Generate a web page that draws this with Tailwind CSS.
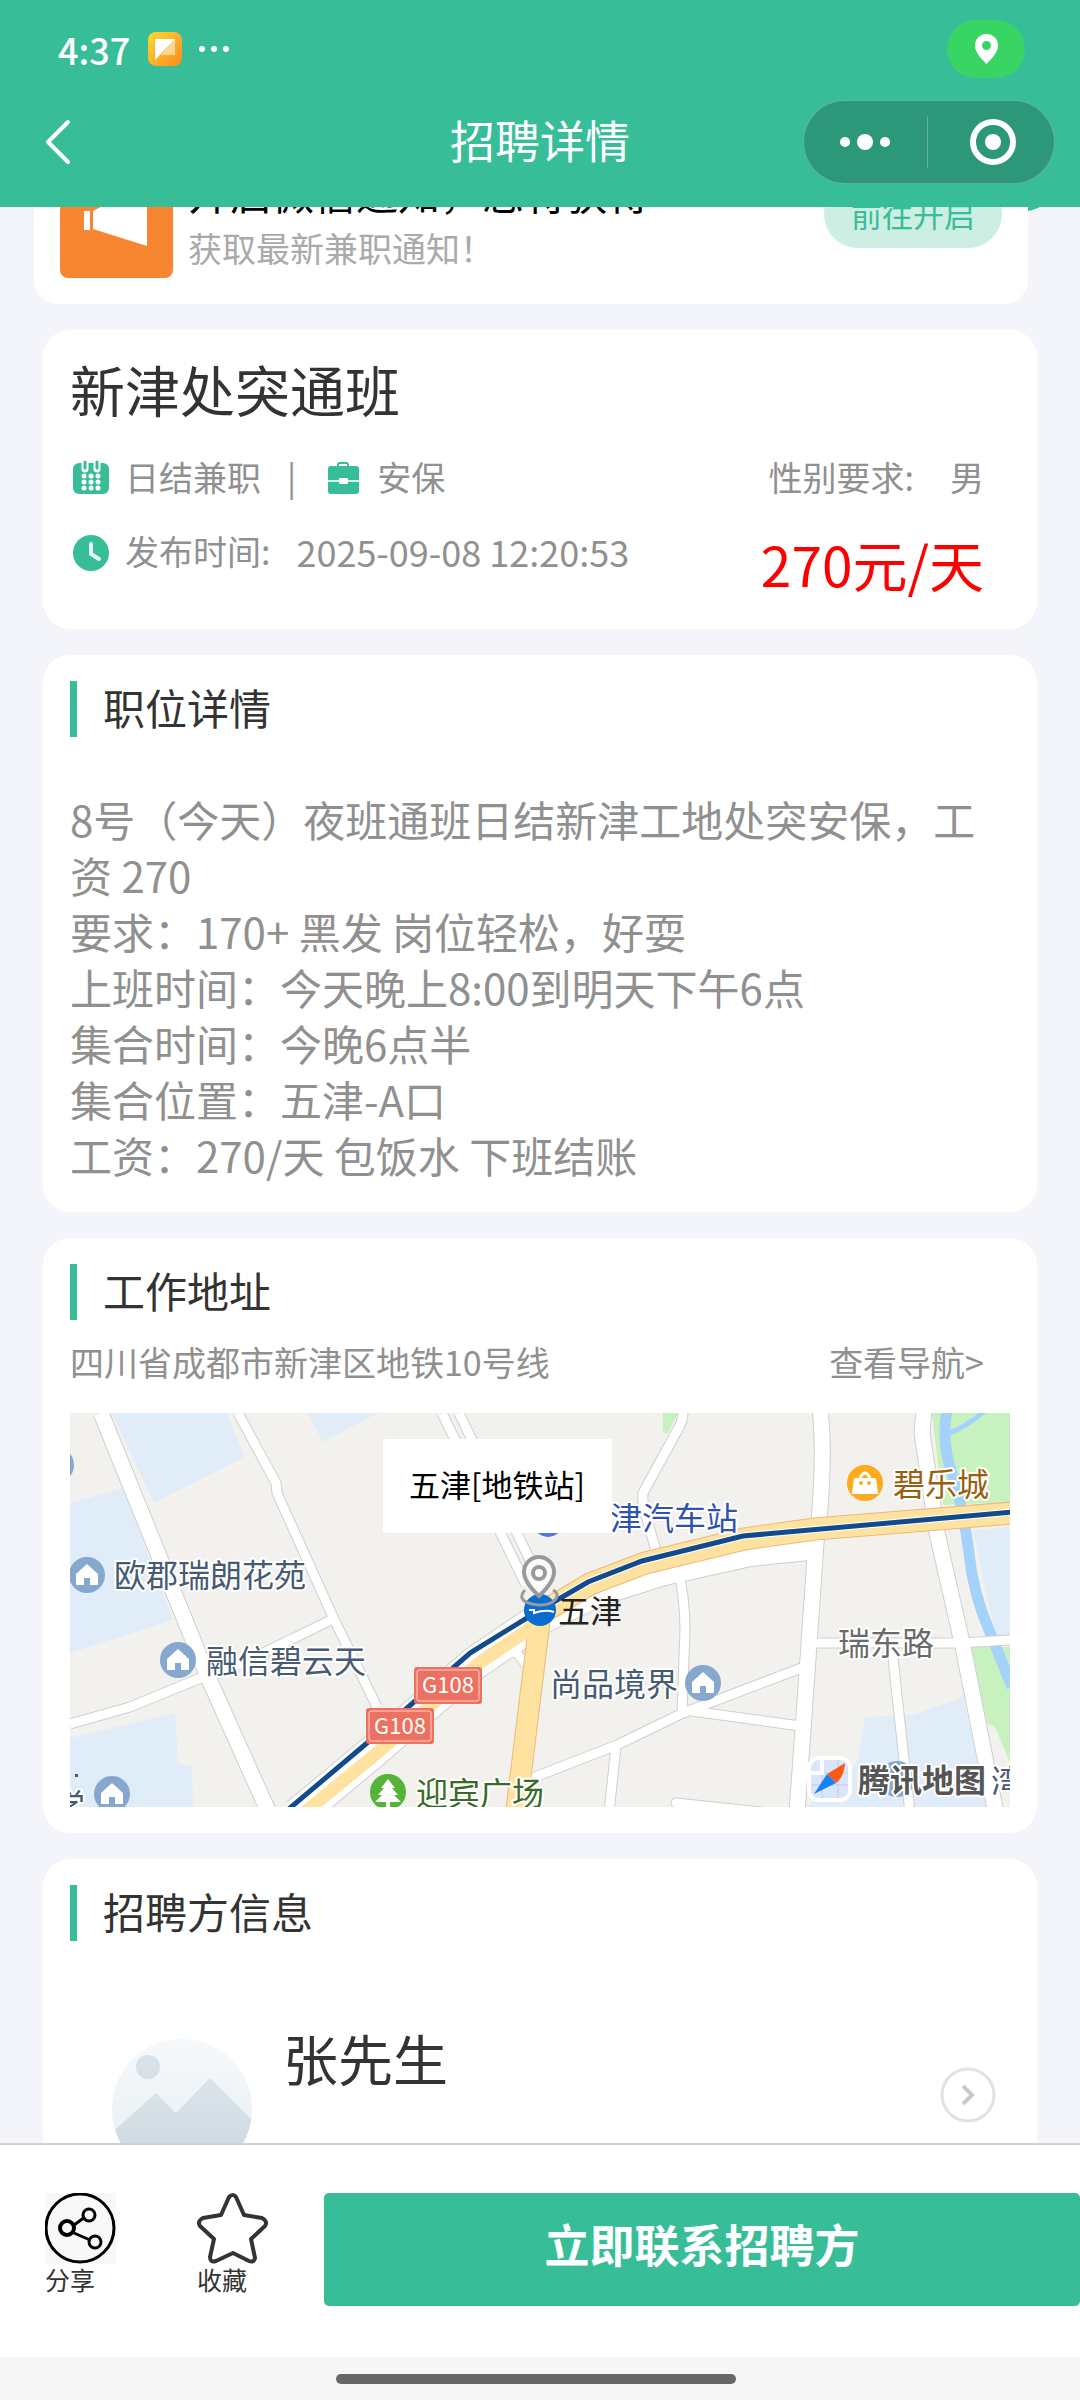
<!DOCTYPE html>
<html lang="zh-CN">
  <head>
    <meta charset="UTF-8" />
    <meta name="viewport" content="width=device-width, initial-scale=1.0" />
    <title>招聘详情</title>
    <script src="https://cdn.jsdelivr.net/npm/@tailwindcss/browser@4"></script>
  </head>
  <body class="flex h-screen flex-col bg-[#f4f5fa] font-['Noto_Sans_CJK_SC',sans-serif] text-[#333333]">
    <!-- Status bar + title bar -->
    <header class="relative shrink-0 bg-[#38bd99] text-white">
      <div class="flex h-[98px] items-center justify-between pr-[55px] pl-[58px]">
        <div class="flex items-center">
          <span class="text-[36px] leading-[48px] font-medium">4:37</span>
          <svg class="ml-[18px] h-[34px] w-[34px]" viewBox="0 0 34 34">
            <defs>
              <linearGradient id="note" x1="0" y1="0" x2="1" y2="1">
                <stop offset="0" stop-color="#fdd835" />
                <stop offset="1" stop-color="#fb8c1e" />
              </linearGradient>
            </defs>
            <rect width="34" height="34" rx="8" fill="url(#note)" />
            <path d="M27 7v16H13z" fill="#ffd591" />
            <path d="M7 7h20L7 28z" fill="#fff" />
          </svg>
          <svg class="ml-4 h-2 w-8" viewBox="0 0 32 8" fill="#fff">
            <circle cx="4" cy="4" r="3" />
            <circle cx="16" cy="4" r="3" />
            <circle cx="28" cy="4" r="3" />
          </svg>
        </div>
        <div class="flex h-[58px] w-[78px] items-center justify-center rounded-full bg-[#38d464]">
          <svg class="h-[30px] w-[23px]" viewBox="0 0 23 30">
            <path
              fill="#fff"
              fill-rule="evenodd"
              d="M11.500 0A11.500 11.500 0 0 0 0 11.500C0 19 7 25 11.500 30C16 25 23 19 23 11.500A11.500 11.500 0 0 0 11.500 0ZM11.500 7a4.500 4.500 0 1 1 0 9a4.500 4.500 0 0 1 0-9Z"
            />
          </svg>
        </div>
      </div>

      <div class="grid h-[109px] grid-cols-3 items-start px-[25px]">
        <button type="button" aria-label="返回" class="mt-[19px] ml-4 w-8">
          <svg class="h-[50px] w-8" viewBox="0 0 32 50" fill="none" stroke="#fff" stroke-width="4">
            <path d="M27 5L7 25L27 45" stroke-linecap="round" stroke-linejoin="round" />
          </svg>
        </button>
        <h1 class="mt-2 text-center text-[45px] leading-[68px]">招聘详情</h1>
        <div
          class="mt-[2px] flex h-[84px] w-[252px] items-center justify-self-end rounded-full border border-white/25 bg-[#2c9779]"
        >
          <button type="button" aria-label="更多" class="flex flex-1 justify-center">
            <svg class="h-4 w-[50px]" viewBox="0 0 50 16" fill="#fff">
              <circle cx="5" cy="8" r="5" />
              <circle cx="25" cy="8" r="8" />
              <circle cx="45" cy="8" r="5" />
            </svg>
          </button>
          <span class="h-[52px] w-px bg-white/25"></span>
          <button type="button" aria-label="关闭" class="flex flex-1 justify-center pl-1">
            <svg class="h-12 w-12" viewBox="0 0 48 48">
              <circle cx="24" cy="24" r="20" fill="none" stroke="#fff" stroke-width="6" />
              <circle cx="24" cy="24" r="8" fill="#fff" />
            </svg>
          </button>
        </div>
      </div>
      <svg class="absolute top-full right-[34px] h-[6px] w-[24px]" viewBox="0 0 24 6">
        <path d="M0 0H18Q10 4 0 5Z" fill="#38bd99" />
      </svg>
    </header>

    <main class="relative min-h-0 flex-1 overflow-y-auto [scrollbar-width:none]">
      <div class="-mt-[68px] flex flex-col gap-[26px] pb-10">
        <!-- Notice -->
        <section class="mr-[52px] ml-[34px] flex items-center rounded-3xl bg-white p-[26px]">
          <svg class="h-[113px] w-[113px]" viewBox="0 0 113 113">
            <rect width="113" height="113" rx="8" fill="#f68632" />
            <path d="M24 46H30V65H24ZM33 46L52 36L87 20V81L33 64Z" fill="#fff" />
          </svg>
          <div class="ml-[15px] flex-1">
            <p class="text-[42px] leading-[52px] text-black">开启微信通知，您将获得</p>
            <p class="text-[34px] leading-[60px] text-[#aaaaaa]">获取最新兼职通知！</p>
          </div>
          <button
            type="button"
            class="-mt-4 h-[68px] w-[178px] rounded-full bg-[#cceee3] text-[31px] leading-[62px] text-[#38bd99]"
          >
            前往开启
          </button>
        </section>

        <!-- Job summary -->
        <section class="mx-[43px] rounded-[27px] bg-white px-[27px] py-[26px]">
          <h2 class="text-[55px] leading-[64px]">新津处突通班</h2>
          <div class="mt-[29px] flex justify-between pr-[26px] text-[34px] leading-[56px] text-[#909090]">
            <div class="flex items-center">
              <svg class="mr-[13px] h-[42px] w-[42px]" viewBox="0 0 42 42">
                <rect x="3" y="7" width="36" height="31" rx="6" fill="#38bd99" />
                <path d="M15 5v8M27 5v8" stroke="#fff" stroke-width="7" stroke-linecap="round" />
                <path d="M15 6v6M27 6v6" stroke="#38bd99" stroke-width="3" stroke-linecap="round" />
                <g fill="#fff">
                  <circle cx="14" cy="20" r="2.500" /><circle cx="21" cy="20" r="2.500" /><circle cx="28" cy="20" r="2.500" />
                  <circle cx="14" cy="26" r="2.500" /><circle cx="21" cy="26" r="2.500" /><circle cx="28" cy="26" r="2.500" />
                  <circle cx="14" cy="32" r="2.500" /><circle cx="21" cy="32" r="2.500" /><circle cx="28" cy="32" r="2.500" />
                </g>
              </svg>
              <span>日结兼职</span>
              <span class="px-[26px]">|</span>
              <svg class="mr-[13px] h-[42px] w-[42px]" viewBox="0 0 42 42">
                <path d="M16 11V9q0-2 2-2h6q2 0 2 2v2" fill="none" stroke="#38bd99" stroke-width="2" />
                <rect x="6" y="10" width="31" height="28" rx="3" fill="#38bd99" />
                <path d="M6 25H37" stroke="#d5f2ea" stroke-width="2" />
                <rect x="17" y="22" width="9" height="6" rx="1" fill="#fff" />
              </svg>
              <span>安保</span>
            </div>
            <div class="flex gap-9"><span>性别要求:</span><span>男</span></div>
          </div>
          <div class="mt-[18px] flex items-start justify-between pr-[26px]">
            <div class="flex items-center text-[34px] leading-[56px] text-[#909090]">
              <svg class="mr-[13px] h-[42px] w-[42px]" viewBox="0 0 42 42">
                <circle cx="21" cy="23" r="18" fill="#38bd99" />
                <path d="M21 14V24L29 29" fill="none" stroke="#e4f7f1" stroke-width="4" stroke-linecap="round" />
              </svg>
              <span>发布时间:</span>
              <time class="ml-[26px] text-[36px]">2025-09-08 12:20:53</time>
            </div>
            <p class="text-[55px] leading-[80px] text-[#ff0000]">270元/天</p>
          </div>
        </section>

        <!-- Description -->
        <section class="mx-[43px] rounded-[27px] bg-white px-[27px] pt-[26px] pb-[29px]">
          <div class="flex">
            <span class="h-14 w-[7px] bg-[#38bd99]"></span>
            <h3 class="ml-[26px] text-[42px] leading-[52px]">职位详情</h3>
          </div>
          <p class="mt-[54px] text-[42px] leading-[56px] text-[#909090]">
            8号（今天）夜班通班日结新津工地处突安保，工资 270<br />
            要求：170+ 黑发 岗位轻松，好耍<br />
            上班时间：今天晚上8:00到明天下午6点<br />
            集合时间：今晚6点半<br />
            集合位置：五津-A口<br />
            工资：270/天 包饭水 下班结账
          </p>
        </section>

        <!-- Address -->
        <section class="mx-[43px] rounded-[27px] bg-white px-[27px] py-[26px]">
          <div class="flex">
            <span class="h-14 w-[7px] bg-[#38bd99]"></span>
            <h3 class="ml-[26px] text-[42px] leading-[52px]">工作地址</h3>
          </div>
          <div class="mt-[14px] flex justify-between pr-[26px] text-[34px] leading-[56px] text-[#909090]">
            <p>四川省成都市新津区地铁10号线</p>
            <a href="#map">查看导航&gt;</a>
          </div>
          <svg
            id="map"
            class="mt-[23px] h-[394px] w-full bg-[#f2f1ee]"
            viewBox="0 0 940 394"
            preserveAspectRatio="xMidYMid slice"
          >
            <defs>
              <g id="home">
                <circle r="18" fill="#86a8cf" />
                <path d="M0 -11L11 -1V9Q11 10 10 10H3V3H-3V10H-10Q-11 10 -11 9V-1Z" fill="#fff" />
              </g>
              <!-- white streets -->
              <g id="streets" fill="none" stroke-linejoin="round">
                <path d="M168 0L206 70L207 80L263 204L307 294M137 265L175 249L263 206M133 264L60 294L0 311" />
                <path d="M372 0L456 172M389 0L472 172M436 234Q448 238 456 252" />
                <path d="M613 0Q613 8 608 16L573 80Q572 92 577 106L586 138M607 150Q615 184 615 217L612 300" />
                <path d="M440 374L470 362L547 332L613 300L734 254M622 298L730 313M546 333L539 400" />
                <path d="M747 230H890L940 227M822 236L830 310L840 400M606 390L720 402" stroke-linecap="round" />
              </g>
              <g id="avenues" fill="none" stroke-linejoin="round">
                <path d="M31 0L138 264L199 400M750 -4Q755 40 749 107L746 130L737 260L727 400" />
                <path d="M854 -4L852 20L858 60L867 120L893 234L926 400" />
              </g>
            </defs>

            <!-- land, parks and water -->
            <g fill="#e0edf8">
              <path d="M42 0H157L175 44L84 90ZM0 90L53 75L103 207L0 240ZM238 0H308L253 29Z" />
              <path d="M0 325L105 300L108 350L122 354L123 394H0ZM903 117L940 114V224H926Z" />
              <path d="M795 304L843 302L893 284L917 394H737L787 350Z" />
            </g>
            <path d="M862 0H940V89L873 92ZM593 0H608L598 20H593ZM898 234H940V350L925 314L917 310Z" fill="#c8f1c0" />
            <path d="M877 -4Q871 30 882 60Q892 88 899 140Q903 180 919 217L942 274" fill="none" stroke="#a5d2fa" stroke-width="11" />
            <path d="M880 20Q895 14 915 -2" fill="none" stroke="#a5d2fa" stroke-width="5" />

            <use href="#streets" stroke="#cfcfcf" stroke-width="11" />
            <use href="#avenues" stroke="#cfcfcf" stroke-width="17" />
            <path d="M227 402L305 337L405 250L474 203L530 176L590 157L680 137L748 130" fill="none" stroke="#cfcfcf" stroke-width="34" />
            <use href="#streets" stroke="#fff" stroke-width="9" />
            <use href="#avenues" stroke="#fff" stroke-width="15" />
            <path d="M227 402L305 337L405 250L474 203L530 176L590 157L680 137L748 130" fill="none" stroke="#fff" stroke-width="32" />

            <!-- highway and metro line -->
            <path d="M470 205L446 400" stroke="#efb878" stroke-width="22" />
            <path d="M470 205L446 400" stroke="#fee3a0" stroke-width="20" />
            <path d="M228 405L307 340L409 250L479 203" fill="none" stroke="#fee3a0" stroke-width="13" />
            <path d="M473 199L520 171L575 150L674 126L745 116L942 100" fill="none" stroke="#efb878" stroke-width="23" />
            <path d="M473 199L520 171L575 150L674 126L745 116L942 100" fill="none" stroke="#fee3a0" stroke-width="21" />
            <path d="M214 400L297 330L400 240L470 197L518 169L572 148L673 123L942 99" fill="none" stroke="#fff" stroke-width="7" />
            <path d="M214 400L297 330L400 240L470 197L518 169L572 148L673 123L942 99" fill="none" stroke="#114b8c" stroke-width="5" />

            <!-- road signs -->
            <g fill="#ec7160">
              <rect x="344" y="254" width="68" height="37" rx="3" />
              <rect x="296" y="295" width="68" height="36" rx="3" />
            </g>
            <g fill="none" stroke="#fbd3cc">
              <rect x="347" y="257" width="62" height="31" rx="2" />
              <rect x="299" y="298" width="62" height="30" rx="2" />
            </g>
            <g fill="#fff" font-size="22" text-anchor="middle">
              <text x="378" y="280">G108</text>
              <text x="330" y="321">G108</text>
            </g>

            <!-- places -->
            <circle cx="-14" cy="52" r="18" fill="#86a8cf" />
            <use href="#home" x="17" y="162" />
            <use href="#home" x="108" y="247" />
            <use href="#home" x="42" y="381" />
            <use href="#home" x="633" y="270" />
            <circle cx="827" cy="366" r="18" fill="#86a8cf" />
            <circle cx="795" cy="70" r="18" fill="#fbab1c" />
            <path d="M785 66H805L807 80H783Z" fill="#fff" stroke="#fff" stroke-width="2" stroke-linejoin="round" />
            <path d="M790 65Q795 55 800 65" fill="none" stroke="#fff" stroke-width="3" />
            <circle cx="791" cy="70" r="2" fill="#fbab1c" />
            <circle cx="799" cy="70" r="2" fill="#fbab1c" />
            <circle cx="318" cy="379" r="18" fill="#55b437" />
            <path d="M318 366L325 375H322L328 382H324L331 389H320V394H316V389H305L312 382H308L314 375H311Z" fill="#fff" />
            <circle cx="478" cy="109" r="15" fill="#4f77de" />
            <g font-size="32" stroke="#fff" stroke-width="4" stroke-linejoin="round" paint-order="stroke">
              <g fill="#465a72">
                <text x="44" y="174">欧郡瑞朗花苑</text>
                <text x="136" y="260">融信碧云天</text>
                <text x="480" y="283">尚品境界</text>
                <text x="921" y="380">湾</text>
                <text x="-17" y="404">学</text>
              </g>
              <text x="346" y="392" fill="#396a26">迎宾广场</text>
              <text x="823" y="83" fill="#98600c">碧乐城</text>
              <text x="540" y="117" fill="#2f52ae">津汽车站</text>
              <text x="768" y="242" fill="#6a6a6a">瑞东路</text>
            </g>
            <rect x="5" y="361" width="3" height="3" fill="#465a72" />

            <!-- station marker -->
            <circle cx="470" cy="197" r="16" fill="#0a6bd0" />
            <path d="M459 197h5v3q12 -4 20 -1" fill="none" stroke="#fff" stroke-width="2" />
            <text x="488" y="210" font-size="32" fill="#222">五津</text>
            <path d="M469 183Q454 169 454 159A15 15 0 0 1 484 159Q484 169 469 183Z" fill="#fff" fill-opacity="0.7" stroke="#989b9e" stroke-width="4" />
            <circle cx="469" cy="160" r="6" fill="#fff" stroke="#989b9e" stroke-width="4" />
            <path d="M455 177Q446 187 462 191Q478 194 485 187Q490 181 483 177" fill="none" stroke="#989b9e" stroke-width="3" />
            <rect x="313" y="26" width="229" height="94" fill="#fff" />
            <text x="427" y="84" font-size="31" text-anchor="middle" fill="#000">五津[地铁站]</text>

            <!-- map brand -->
            <rect x="739" y="345" width="41" height="42" rx="10" fill="#d9e6fa" stroke="#fff" stroke-width="4" />
            <path d="M752 347V385M768 347V385M741 360H778M741 372H778" stroke="#c6c8f0" stroke-width="1" />
            <path d="M752 347V360H741" fill="none" stroke="#fff" stroke-width="4" />
            <path d="M775 350L757 361L766 370Q774 364 775 350Z" fill="#fb5a14" />
            <path d="M744 381L757 361L766 370Z" fill="#1583f5" />
            <text x="788" y="379" font-size="32" font-weight="700" fill="#555" stroke="#fff" stroke-width="4" stroke-linejoin="round" paint-order="stroke">腾讯地图</text>
          </svg>
        </section>

        <!-- Recruiter -->
        <section class="mx-[43px] rounded-[27px] bg-white px-[27px] pt-[26px] pb-10">
          <div class="flex">
            <span class="h-14 w-[7px] bg-[#38bd99]"></span>
            <h3 class="ml-[26px] text-[42px] leading-[52px]">招聘方信息</h3>
          </div>
          <div class="mt-[74px] flex items-start pr-[14px] pl-[42px]">
            <svg class="mt-6 h-[141px] w-[141px]" viewBox="0 0 141 141">
              <defs>
                <clipPath id="round"><circle cx="70" cy="70" r="70" /></clipPath>
                <linearGradient id="sky" x1="0" y1="0" x2="0" y2="1">
                  <stop offset="0" stop-color="#f6f9fb" />
                  <stop offset="1" stop-color="#e6edf2" />
                </linearGradient>
                <linearGradient id="hill" x1="0" y1="0" x2="0" y2="1">
                  <stop offset="0" stop-color="#dbe4ea" />
                  <stop offset="1" stop-color="#c8d7de" />
                </linearGradient>
              </defs>
              <g clip-path="url(#round)">
                <rect width="141" height="141" fill="url(#sky)" />
                <circle cx="36" cy="28" r="12" fill="#d8e1e8" />
                <path d="M-4 97L44 54L64 74L98 39L146 87V141H-4Z" fill="url(#hill)" />
              </g>
            </svg>
            <p class="ml-[30px] flex-1 text-[55px] leading-[84px]">张先生</p>
            <button type="button" aria-label="查看招聘方" class="mt-[52px]">
              <svg class="h-14 w-14" viewBox="0 0 56 56" fill="none">
                <circle cx="28" cy="28" r="26" stroke="#e2e2e2" stroke-width="3" />
                <path d="M23 19L32 28L23 37" stroke="#cacaca" stroke-width="4" />
              </svg>
            </button>
          </div>
        </section>
      </div>
    </main>

    <!-- Action bar -->
    <footer class="shrink-0 border-t-2 border-[#d2d2d4] bg-white">
      <div class="flex items-start pt-12 pb-[51px]">
        <button type="button" class="ml-[45px] w-[72px] text-left text-[25px] leading-[30px]">
          <svg class="h-[71px] w-[71px] bg-[#f8f8f8]" viewBox="0 0 71 71" fill="none" stroke="#000">
            <circle cx="35" cy="35" r="34" stroke-width="3" />
            <path d="M29 32L40 24M29 40L45 47" stroke-width="3" />
            <circle cx="22" cy="35" r="7" stroke-width="4" />
            <circle cx="44" cy="22" r="6" stroke-width="3" />
            <circle cx="50" cy="49" r="6" stroke-width="3" />
          </svg>
          分享
        </button>
        <button type="button" class="ml-20 w-[72px] text-left text-[25px] leading-[30px]">
          <svg class="h-[71px] w-[71px]" viewBox="0 0 71 71" fill="none" stroke="#333" stroke-width="4" stroke-linejoin="round">
            <path
              d="M32 4Q36 0 39 4L47 22L65 25Q71 28 68 33L54 46L58 65Q57 70 52 68L36 60L19 68Q13 70 13 64L17 46L3 33Q0 28 6 25L24 22Z"
            />
          </svg>
          收藏
        </button>
        <button
          type="button"
          class="ml-[55px] h-[113px] flex-1 rounded-[5px] bg-[#38bd99] pb-3 text-[45px] leading-[100px] font-bold text-white"
        >
          立即联系招聘方
        </button>
      </div>
      <div class="flex h-[43px] justify-center bg-[#f6f6f6] pt-[17px] pr-2">
        <span class="h-[10px] w-[400px] rounded-full bg-[#666666]"></span>
      </div>
    </footer>
  </body>
</html>
